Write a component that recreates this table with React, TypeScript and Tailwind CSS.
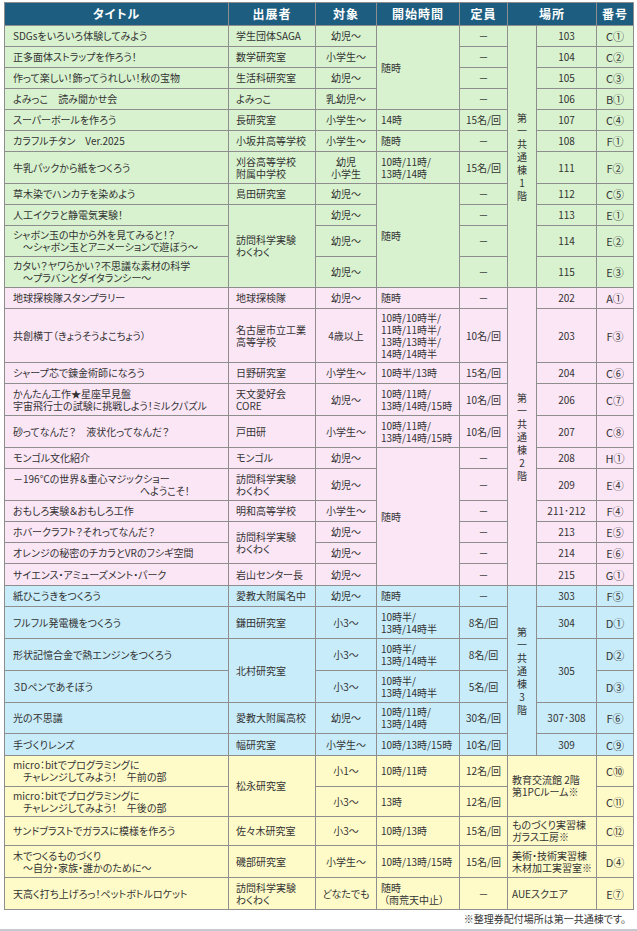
import React from 'react';

const cell = 'border border-[#8e8e8e] align-middle';

const GREEN = 'bg-[#d8f2cf]';
const PINK = 'bg-[#fbe6f6]';
const BLUE = 'bg-[#c8ecf9]';
const YELLOW = 'bg-[#fffbc9]';

type CellProps = { children?: React.ReactNode; span?: number; col?: number };

const Ti = ({ children }: CellProps) => (
  <td className={`${cell} pl-2 pr-1 text-left`}>{children}</td>
);
const Ex = ({ children, span }: CellProps) => (
  <td rowSpan={span} className={`${cell} pl-[7px] text-left`}>{children}</td>
);
const Tg = ({ children }: CellProps) => <td className={`${cell} text-center`}>{children}</td>;
const Tm = ({ children, span }: CellProps) => (
  <td rowSpan={span} className={`${cell} pl-1 text-left`}>{children}</td>
);
const Cp = ({ children = '－' }: CellProps) => <td className={`${cell} text-center`}>{children}</td>;
const Rm = ({ children, span, col }: CellProps) => (
  <td rowSpan={span} colSpan={col} className={`${cell} ${col ? 'pl-1 text-left' : 'text-center'}`}>
    {children}
  </td>
);
const No = ({ children }: CellProps) => (
  <td className={`${cell} text-center text-[11px] [font-feature-settings:normal]`}>{children}</td>
);

// 2行目の字下げ
const Ind = ({ children, w = 'pl-[10px]' }: { children: React.ReactNode; w?: string }) => (
  <span className={`inline-block ${w}`}>{children}</span>
);

const Floor = ({ chars, span }: { chars: string; span: number }) => (
  <td rowSpan={span} className={`${cell} text-center`}>
    <div className="flex flex-col items-center leading-[13px]">
      {chars.split('').map((c, i) => (
        <span key={i}>{c}</span>
      ))}
    </div>
  </td>
);

const headers = ['タイトル', '出展者', '対象', '開始時間', '定員', '場所', '番号'];

export default function App() {
  return (
    <div className="h-[931px] flex flex-col bg-white font-['Noto_Sans_CJK_JP',sans-serif] [font-feature-settings:'palt'] text-[10px] text-[#333] leading-[12px]">
      <table className="ml-1 mt-[2px] w-[629px] table-fixed border-collapse">
        <colgroup>
          <col className="w-[224px]" />
          <col className="w-[87px]" />
          <col className="w-[61px]" />
          <col className="w-[83px]" />
          <col className="w-[48px]" />
          <col className="w-[29px]" />
          <col className="w-[60px]" />
          <col className="w-[37px]" />
        </colgroup>
        <thead>
          <tr className="h-[23px] bg-[#1d5e80] text-white text-[12px] font-bold">
            {headers.map((h) => (
              <th
                key={h}
                colSpan={h === '場所' ? 2 : 1}
                className="border border-[#8e8e8e] text-center font-bold tracking-[1px]"
              >
                {h}
              </th>
            ))}
          </tr>
        </thead>
        <tbody>
          {/* 第一共通棟1階 */}
          <tr className={`${GREEN} h-[21px]`}>
            <Ti>SDGsをいろいろ体験してみよう</Ti>
            <Ex>学生団体SAGA</Ex>
            <Tg>幼児～</Tg>
            <Tm span={4}>随時</Tm>
            <Cp />
            <Floor chars="第一共通棟1階" span={11} />
            <Rm>103</Rm>
            <No>C①</No>
          </tr>
          <tr className={`${GREEN} h-[21px]`}>
            <Ti>正多面体ストラップを作ろう！</Ti>
            <Ex>数学研究室</Ex>
            <Tg>小学生～</Tg>
            <Cp />
            <Rm>104</Rm>
            <No>C②</No>
          </tr>
          <tr className={`${GREEN} h-[21px]`}>
            <Ti>作って楽しい！飾ってうれしい！秋の宝物</Ti>
            <Ex>生活科研究室</Ex>
            <Tg>幼児～</Tg>
            <Cp />
            <Rm>105</Rm>
            <No>C③</No>
          </tr>
          <tr className={`${GREEN} h-[21px]`}>
            <Ti>よみっこ　読み聞かせ会</Ti>
            <Ex>よみっこ</Ex>
            <Tg>乳幼児～</Tg>
            <Cp />
            <Rm>106</Rm>
            <No>B①</No>
          </tr>
          <tr className={`${GREEN} h-[21px]`}>
            <Ti>スーパーボールを作ろう</Ti>
            <Ex>長研究室</Ex>
            <Tg>小学生～</Tg>
            <Tm>14時</Tm>
            <Cp>15名/回</Cp>
            <Rm>107</Rm>
            <No>C④</No>
          </tr>
          <tr className={`${GREEN} h-[21px]`}>
            <Ti>カラフルチタン　Ver.2025</Ti>
            <Ex>小坂井高等学校</Ex>
            <Tg>小学生～</Tg>
            <Tm>随時</Tm>
            <Cp />
            <Rm>108</Rm>
            <No>F①</No>
          </tr>
          <tr className={`${GREEN} h-[32px]`}>
            <Ti>牛乳パックから紙をつくろう</Ti>
            <Ex>
              刈谷高等学校
              <br />
              附属中学校
            </Ex>
            <Tg>
              幼児
              <br />
              小学生
            </Tg>
            <Tm>
              10時/11時/
              <br />
              13時/14時
            </Tm>
            <Cp>15名/回</Cp>
            <Rm>111</Rm>
            <No>F②</No>
          </tr>
          <tr className={`${GREEN} h-[21px]`}>
            <Ti>草木染でハンカチを染めよう</Ti>
            <Ex>島田研究室</Ex>
            <Tg>幼児～</Tg>
            <Tm span={4}>随時</Tm>
            <Cp />
            <Rm>112</Rm>
            <No>C⑤</No>
          </tr>
          <tr className={`${GREEN} h-[21px]`}>
            <Ti>人工イクラと静電気実験！</Ti>
            <Ex span={3}>
              訪問科学実験
              <br />
              わくわく
            </Ex>
            <Tg>幼児～</Tg>
            <Cp />
            <Rm>113</Rm>
            <No>E①</No>
          </tr>
          <tr className={`${GREEN} h-[31px]`}>
            <Ti>
              シャボン玉の中から外を見てみると！？
              <br />
              <Ind>～シャボン玉とアニメーションで遊ぼう～</Ind>
            </Ti>
            <Tg>幼児～</Tg>
            <Cp />
            <Rm>114</Rm>
            <No>E②</No>
          </tr>
          <tr className={`${GREEN} h-[31px]`}>
            <Ti>
              カタい？ヤワらかい？不思議な素材の科学
              <br />
              <Ind>～プラバンとダイタランシー～</Ind>
            </Ti>
            <Tg>幼児～</Tg>
            <Cp />
            <Rm>115</Rm>
            <No>E③</No>
          </tr>

          {/* 第一共通棟2階 */}
          <tr className={`${PINK} h-[21px]`}>
            <Ti>地球探検隊スタンプラリー</Ti>
            <Ex>地球探検隊</Ex>
            <Tg>幼児～</Tg>
            <Tm>随時</Tm>
            <Cp />
            <Floor chars="第一共通棟2階" span={11} />
            <Rm>202</Rm>
            <No>A①</No>
          </tr>
          <tr className={`${PINK} h-[54px]`}>
            <Ti>共創横丁（きょうそうよこちょう）</Ti>
            <Ex>
              名古屋市立工業
              <br />
              高等学校
            </Ex>
            <Tg>4歳以上</Tg>
            <Tm>
              10時/10時半/
              <br />
              11時/11時半/
              <br />
              13時/13時半/
              <br />
              14時/14時半
            </Tm>
            <Cp>10名/回</Cp>
            <Rm>203</Rm>
            <No>F③</No>
          </tr>
          <tr className={`${PINK} h-[21px]`}>
            <Ti>シャープ芯で錬金術師になろう</Ti>
            <Ex>日野研究室</Ex>
            <Tg>小学生～</Tg>
            <Tm>10時半/13時</Tm>
            <Cp>15名/回</Cp>
            <Rm>204</Rm>
            <No>C⑥</No>
          </tr>
          <tr className={`${PINK} h-[32px]`}>
            <Ti>
              かんたん工作★星座早見盤
              <br />
              宇宙飛行士の試験に挑戦しよう！ミルクパズル
            </Ti>
            <Ex>
              天文愛好会
              <br />
              CORE
            </Ex>
            <Tg>幼児～</Tg>
            <Tm>
              10時/11時/
              <br />
              13時/14時/15時
            </Tm>
            <Cp>10名/回</Cp>
            <Rm>206</Rm>
            <No>C⑦</No>
          </tr>
          <tr className={`${PINK} h-[32px]`}>
            <Ti>砂ってなんだ？　液状化ってなんだ？</Ti>
            <Ex>戸田研</Ex>
            <Tg>小学生～</Tg>
            <Tm>
              10時/11時/
              <br />
              13時/14時/15時
            </Tm>
            <Cp>10名/回</Cp>
            <Rm>207</Rm>
            <No>C⑧</No>
          </tr>
          <tr className={`${PINK} h-[21px]`}>
            <Ti>モンゴル文化紹介</Ti>
            <Ex>モンゴル</Ex>
            <Tg>幼児～</Tg>
            <Tm span={6}>随時</Tm>
            <Cp />
            <Rm>208</Rm>
            <No>H①</No>
          </tr>
          <tr className={`${PINK} h-[32px]`}>
            <Ti>
              －196℃の世界＆重心マジックショー
              <br />
              <Ind w="pl-[127px]">へようこそ！</Ind>
            </Ti>
            <Ex>
              訪問科学実験
              <br />
              わくわく
            </Ex>
            <Tg>幼児～</Tg>
            <Cp />
            <Rm>209</Rm>
            <No>E④</No>
          </tr>
          <tr className={`${PINK} h-[21px]`}>
            <Ti>おもしろ実験＆おもしろ工作</Ti>
            <Ex>明和高等学校</Ex>
            <Tg>小学生～</Tg>
            <Cp />
            <Rm>211･212</Rm>
            <No>F④</No>
          </tr>
          <tr className={`${PINK} h-[21px]`}>
            <Ti>ホバークラフト？それってなんだ？</Ti>
            <Ex span={2}>
              訪問科学実験
              <br />
              わくわく
            </Ex>
            <Tg>幼児～</Tg>
            <Cp />
            <Rm>213</Rm>
            <No>E⑤</No>
          </tr>
          <tr className={`${PINK} h-[21px]`}>
            <Ti>オレンジの秘密のチカラとVRのフシギ空間</Ti>
            <Tg>幼児～</Tg>
            <Cp />
            <Rm>214</Rm>
            <No>E⑥</No>
          </tr>
          <tr className={`${PINK} h-[22px]`}>
            <Ti>サイエンス・アミューズメント・パーク</Ti>
            <Ex>岩山センター長</Ex>
            <Tg>幼児～</Tg>
            <Cp />
            <Rm>215</Rm>
            <No>G①</No>
          </tr>

          {/* 第一共通棟3階 */}
          <tr className={`${BLUE} h-[21px]`}>
            <Ti>紙ひこうきをつくろう</Ti>
            <Ex>愛教大附属名中</Ex>
            <Tg>幼児～</Tg>
            <Tm>随時</Tm>
            <Cp />
            <Floor chars="第一共通棟3階" span={6} />
            <Rm>303</Rm>
            <No>F⑤</No>
          </tr>
          <tr className={`${BLUE} h-[32px]`}>
            <Ti>フルフル発電機をつくろう</Ti>
            <Ex>鎌田研究室</Ex>
            <Tg>小3～</Tg>
            <Tm>
              10時半/
              <br />
              13時/14時半
            </Tm>
            <Cp>8名/回</Cp>
            <Rm>304</Rm>
            <No>D①</No>
          </tr>
          <tr className={`${BLUE} h-[32px]`}>
            <Ti>形状記憶合金で熱エンジンをつくろう</Ti>
            <Ex span={2}>北村研究室</Ex>
            <Tg>小3～</Tg>
            <Tm>
              10時半/
              <br />
              13時/14時半
            </Tm>
            <Cp>8名/回</Cp>
            <Rm span={2}>305</Rm>
            <No>D②</No>
          </tr>
          <tr className={`${BLUE} h-[32px]`}>
            <Ti>３Dペンであそぼう</Ti>
            <Tg>小3～</Tg>
            <Tm>
              10時半/
              <br />
              13時/14時半
            </Tm>
            <Cp>5名/回</Cp>
            <No>D③</No>
          </tr>
          <tr className={`${BLUE} h-[31px]`}>
            <Ti>光の不思議</Ti>
            <Ex>愛教大附属高校</Ex>
            <Tg>幼児～</Tg>
            <Tm>
              10時/11時/
              <br />
              13時/14時
            </Tm>
            <Cp>30名/回</Cp>
            <Rm>307･308</Rm>
            <No>F⑥</No>
          </tr>
          <tr className={`${BLUE} h-[22px]`}>
            <Ti>手づくりレンズ</Ti>
            <Ex>幅研究室</Ex>
            <Tg>小学生～</Tg>
            <Tm>10時/13時/15時</Tm>
            <Cp>10名/回</Cp>
            <Rm>309</Rm>
            <No>C⑨</No>
          </tr>

          {/* その他の会場 */}
          <tr className={`${YELLOW} h-[31px]`}>
            <Ti>
              micro：bitでプログラミングに
              <br />
              <Ind>チャレンジしてみよう！　午前の部</Ind>
            </Ti>
            <Ex span={2}>松永研究室</Ex>
            <Tg>小1～</Tg>
            <Tm>10時/11時</Tm>
            <Cp>12名/回</Cp>
            <Rm span={2} col={2}>
              教育交流館 2階
              <br />
              第1PCルーム※
            </Rm>
            <No>C⑩</No>
          </tr>
          <tr className={`${YELLOW} h-[30px]`}>
            <Ti>
              micro：bitでプログラミングに
              <br />
              <Ind>チャレンジしてみよう！　午後の部</Ind>
            </Ti>
            <Tg>小3～</Tg>
            <Tm>13時</Tm>
            <Cp>12名/回</Cp>
            <No>C⑪</No>
          </tr>
          <tr className={`${YELLOW} h-[29px]`}>
            <Ti>サンドブラストでガラスに模様を作ろう</Ti>
            <Ex>佐々木研究室</Ex>
            <Tg>小3～</Tg>
            <Tm>10時/13時</Tm>
            <Cp>15名/回</Cp>
            <Rm col={2}>
              ものづくり実習棟
              <br />
              ガラス工房※
            </Rm>
            <No>C⑫</No>
          </tr>
          <tr className={`${YELLOW} h-[32px]`}>
            <Ti>
              木でつくるものづくり
              <br />
              <Ind>～自分・家族・誰かのために～</Ind>
            </Ti>
            <Ex>磯部研究室</Ex>
            <Tg>小学生～</Tg>
            <Tm>10時/13時/15時</Tm>
            <Cp>15名/回</Cp>
            <Rm col={2}>
              美術・技術実習棟
              <br />
              木材加工実習室※
            </Rm>
            <No>D④</No>
          </tr>
          <tr className={`${YELLOW} h-[32px]`}>
            <Ti>天高く打ち上げろっ！ペットボトルロケット</Ti>
            <Ex>
              訪問科学実験
              <br />
              わくわく
            </Ex>
            <Tg>どなたでも</Tg>
            <Tm>
              随時
              <br />
              <Ind w="pl-[3px]">（雨荒天中止）</Ind>
            </Tm>
            <Cp />
            <Rm col={2}>AUEスクエア</Rm>
            <No>E⑦</No>
          </tr>
        </tbody>
      </table>
      <p className="mt-[3px] pr-[11px] text-right text-[10px]">※整理券配付場所は第一共通棟です。</p>
      <div className="mt-auto h-[2px] bg-[#c5cbd0]" />
    </div>
  );
}
